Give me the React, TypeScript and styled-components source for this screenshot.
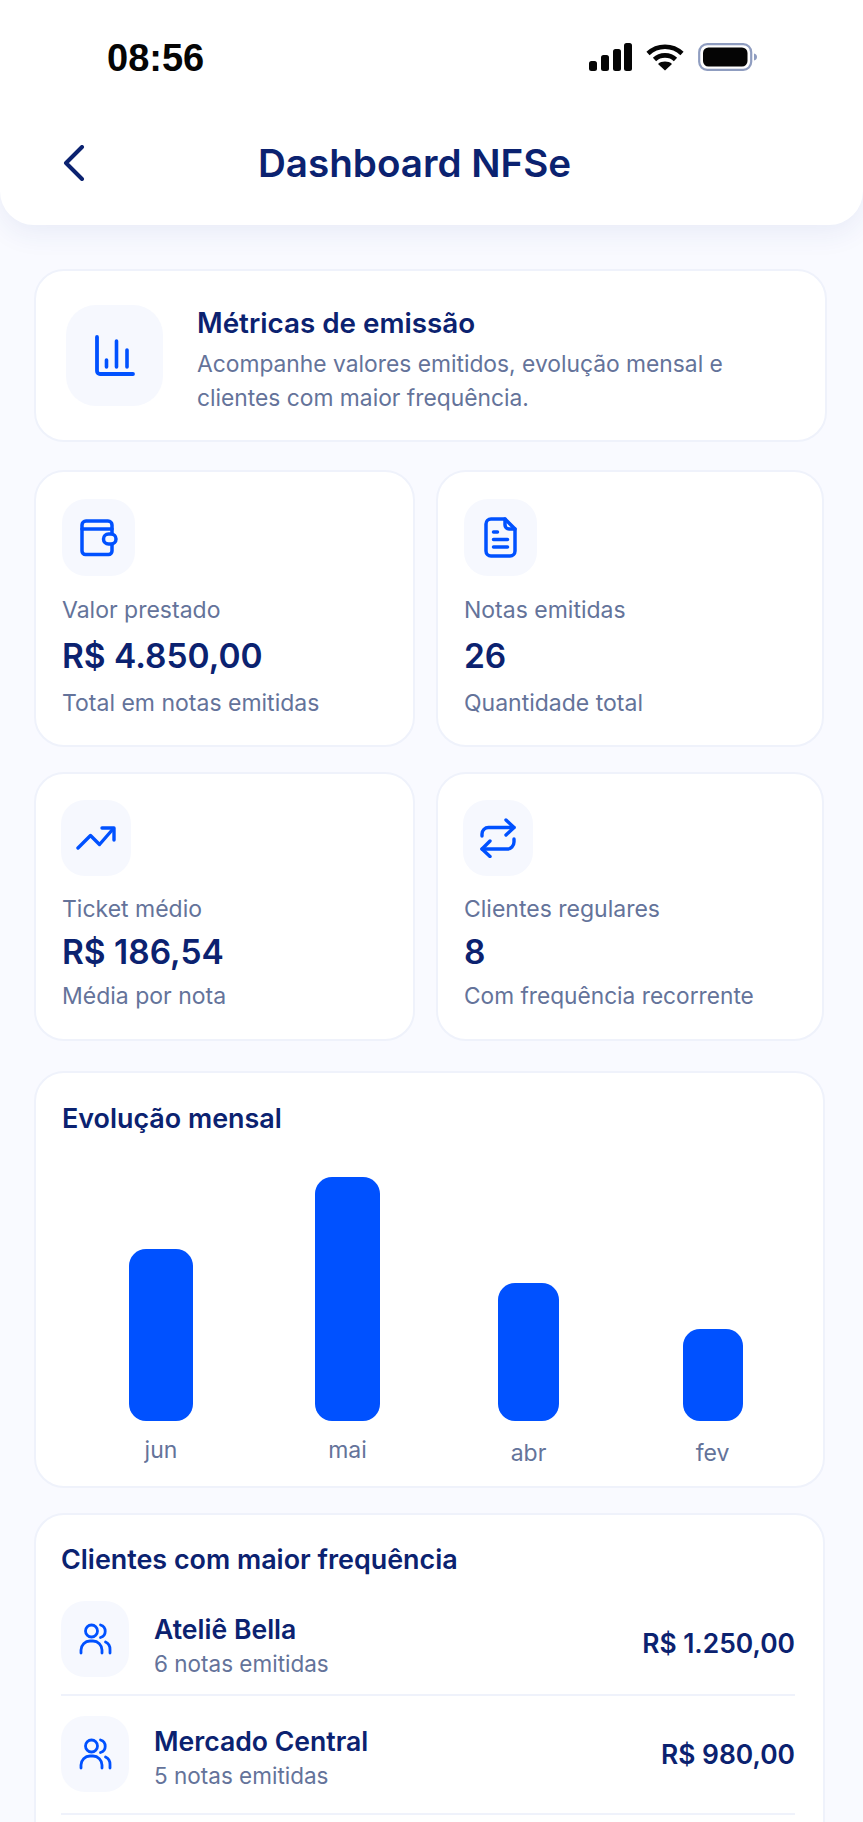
import React from "react";
import styled, { createGlobalStyle } from "styled-components";

const Global = createGlobalStyle`
  html, body { margin: 0; padding: 0; background: #f9faff; }
  body { font-family: Inter, "Noto Sans", sans-serif; -webkit-font-smoothing: antialiased; }
  * { box-sizing: border-box; }
`;

const navy = "#0b2270";
const slate = "#64739a";
const blue = "#0051ff";
const line = "#eff2fb";

const Page = styled.div`
  width: 863px;
  height: 1822px;
  overflow: hidden;
  background: #f9faff;
`;
const Header = styled.header`
  height: 225px;
  background: #ffffff;
  border-radius: 0 0 34px 34px;
  box-shadow: 0 8px 28px rgba(40, 70, 150, 0.08);
  padding: 0 106px 0 63px;
`;
const StatusBar = styled.div`
  height: 100px;
  display: flex;
  align-items: center;
  justify-content: space-between;
  padding: 16px 0 0 44px;
`;
const Time = styled.span`
  font-family: "Liberation Sans", Arial, sans-serif;
  font-weight: 700;
  font-size: 38px;
  color: #050505;
`;
const StatusIcons = styled.div`
  display: flex;
  align-items: center;
  gap: 14px;
  margin-bottom: 2px;
`;
const TitleRow = styled.div`
  display: flex;
  align-items: center;
  height: 64px;
  margin-top: 31px;
`;
const Back = styled.div`
  display: flex;
  width: 195px;
`;
const Title = styled.h1`
  margin: 0;
  font-size: 38.6px;
  line-height: 46px;
  font-weight: 600;
  color: ${navy};
`;
const Content = styled.main`
  padding: 44px 36px 0 34px;
  display: flex;
  flex-direction: column;
`;
const Card = styled.section`
  background: #fff;
  border: 2px solid ${line};
  border-radius: 30px;
`;
const IntroCard = styled(Card)`
  height: 173px;
  width: 793px;
  display: flex;
  align-items: flex-start;
  padding: 34px 0 0 30px;
  gap: 34px;
`;
const Tile = styled.div<{ $w: number; $h: number; $r?: number; $x?: number }>`
  flex: none;
  width: ${(p) => p.$w}px;
  height: ${(p) => p.$h}px;
  margin-left: ${(p) => p.$x ?? 0}px;
  background: #f6f8fe;
  border-radius: ${(p) => p.$r ?? 24}px;
  display: flex;
  align-items: center;
  justify-content: center;
`;
const IntroText = styled.div`
  margin-top: 1px;
`;
const IntroTitle = styled.h2`
  margin: 0 0 7px;
  font-size: 27.8px;
  line-height: 34px;
  font-weight: 600;
  color: ${navy};
`;
const IntroDesc = styled.p`
  margin: 0;
  font-size: 22.8px;
  line-height: 33.5px;
  color: ${slate};
`;
const StatGrid = styled.div<{ $top: number }>`
  display: grid;
  grid-template-columns: 381px 388px;
  column-gap: 21px;
  margin-top: ${(p) => p.$top}px;
`;
const StatCard = styled(Card)<{ $h: number; $pad: number }>`
  height: ${(p) => p.$h}px;
  padding: ${(p) => p.$pad}px 26px 0;
`;
const StatLabel = styled.div<{ $top: number }>`
  margin-top: ${(p) => p.$top}px;
  font-size: 23px;
  line-height: 30px;
  color: ${slate};
`;
const StatValue = styled.div<{ $top: number }>`
  margin-top: ${(p) => p.$top}px;
  font-size: 33.5px;
  line-height: 42px;
  font-weight: 600;
  color: ${navy};
`;
const StatSub = styled.div<{ $top: number; $size?: number }>`
  margin-top: ${(p) => p.$top}px;
  font-size: ${(p) => p.$size ?? 23}px;
  line-height: 30px;
  color: ${slate};
`;
const ChartCard = styled(Card)`
  margin-top: 30px;
  width: 791px;
  height: 417px;
  padding: 28px 0 0 26px;
`;
const SectionTitle = styled.h3`
  margin: 0;
  font-size: 26.9px;
  line-height: 34px;
  font-weight: 600;
  color: ${navy};
`;
const Chart = styled.div`
  display: grid;
  grid-template-columns: 186px 187px 175px 193px;
  height: 244px;
  margin: 42px 0 0 6px;
  align-items: end;
  justify-items: center;
`;
const Bar = styled.div<{ $w: number; $h: number }>`
  width: ${(p) => p.$w}px;
  height: ${(p) => p.$h}px;
  background: ${blue};
  border-radius: 17px;
`;
const Labels = styled(Chart)`
  height: auto;
  margin-top: 14px;
  align-items: start;
`;
const BarLabel = styled.span<{ $drop: number }>`
  font-size: 23px;
  line-height: 30px;
  color: ${slate};
  margin-top: ${(p) => p.$drop}px;
`;
const ClientsCard = styled(Card)`
  margin-top: 25px;
  width: 791px;
  height: 420px;
  padding: 27px 28px 0 25px;
`;
const ClientRow = styled.div<{ $top: number; $pb: number }>`
  display: flex;
  align-items: flex-start;
  margin-top: ${(p) => p.$top}px;
  padding-bottom: ${(p) => p.$pb}px;
  border-bottom: 2px solid ${line};
`;
const ClientText = styled.div<{ $top: number }>`
  flex: 1;
  margin-left: 25px;
  padding-top: ${(p) => p.$top}px;
`;
const ClientName = styled.div`
  font-size: 26.6px;
  line-height: 34px;
  font-weight: 600;
  color: ${navy};
`;
const ClientSub = styled.div`
  font-size: 22.5px;
  line-height: 30px;
  color: ${slate};
  margin-top: 3px;
`;
const Amount = styled.div<{ $top: number }>`
  font-size: 26.4px;
  line-height: 34px;
  font-weight: 600;
  color: ${navy};
  margin-top: ${(p) => p.$top}px;
`;

const Signal = () => (
  <svg width="43" height="28" viewBox="0 0 43 28" fill="#050505">
    <rect x="0" y="18" width="8" height="10" rx="2.5" />
    <rect x="12" y="12" width="8" height="16" rx="2.5" />
    <rect x="24" y="6" width="8" height="22" rx="2.5" />
    <rect x="35" y="0" width="8" height="28" rx="2.5" />
  </svg>
);
const Wifi = () => (
  <svg width="38" height="28" viewBox="0 0 38 28" fill="none" stroke="#050505" strokeWidth="4.6">
    <path d="M2 10.500C11.500 1.500 26.500 1.500 36 10.500" />
    <path d="M8.500 16.500C14 11 24 11 29.500 16.500" />
    <path d="M19 27.500L12 21C15.500 17.800 22.500 17.800 26 21Z" fill="#050505" stroke="none" />
  </svg>
);
const Battery = () => (
  <svg width="59" height="28" viewBox="0 0 59 28" fill="none">
    <rect x="1.200" y="1.200" width="52" height="25.600" rx="8" stroke="#8f9dc0" strokeWidth="2.200" />
    <rect x="5" y="4.500" width="44.500" height="19" rx="5.500" fill="#050505" />
    <path d="M56 10.500c2 .5 3 1.800 3 3.500s-1 3-3 3.500z" fill="#8f9dc0" />
  </svg>
);
const Chevron = () => (
  <svg width="22" height="36" viewBox="0 0 22 36" fill="none" stroke={navy} strokeWidth="4" strokeLinecap="round" strokeLinejoin="round">
    <path d="M19 2L3 18l16 16" />
  </svg>
);
const ChartIcon = () => (
  <svg width="40" height="42" viewBox="0 0 40 42" fill="none" stroke={blue} strokeLinecap="round">
    <path d="M2 2v34a3 3 0 0 0 3 3h33" strokeWidth="3.800" />
    <path d="M11.500 25v7M21.500 6v26M32 15v17" strokeWidth="3.600" />
  </svg>
);
const WalletIcon = () => (
  <svg width="38" height="38" viewBox="0 0 38 38" fill="none" stroke={blue} strokeWidth="3.500" strokeLinecap="round" strokeLinejoin="round">
    <path d="M32 14V6a4 4 0 0 0-4-4H6a4 4 0 0 0-4 4v26a3.500 3.500 0 0 0 3.500 3.500H28.500a3.500 3.500 0 0 0 3.500-3.500v-6" />
    <path d="M2 10h30" />
    <rect x="23.500" y="15" width="12.500" height="10" rx="5" fill="#f6f8fe" />
  </svg>
);
const FileIcon = () => (
  <svg width="33" height="41" viewBox="0 0 33 41" fill="none" stroke={blue} strokeWidth="3.500" strokeLinecap="round" strokeLinejoin="round">
    <path d="M21 2H7a5 5 0 0 0-5 5v27a5 5 0 0 0 5 5h19a5 5 0 0 0 5-5V12L21 2z" />
    <path d="M21 2v6a4 4 0 0 0 4 4h6" />
    <path d="M9.500 15h4M9.500 22.500h14M9.500 30h14" />
  </svg>
);
const TrendIcon = () => (
  <svg width="40" height="24" viewBox="0 0 40 24" fill="none" stroke={blue} strokeWidth="3.400" strokeLinecap="round" strokeLinejoin="round">
    <path d="M2 22l12.500-12.500L23.500 18.500 37 3" />
    <path d="M26 2h12v12" />
  </svg>
);
const RepeatIcon = () => (
  <svg width="36" height="40" viewBox="0 0 36 40" fill="none" stroke={blue} strokeWidth="3.400" strokeLinecap="round" strokeLinejoin="round">
    <path d="M26 2l8 7.500-8 7.500" />
    <path d="M2 18v-2a6.500 6.500 0 0 1 6.500-6.500H34" />
    <path d="M10 23l-8 8 8 7.500" />
    <path d="M34 21v3a7 7 0 0 1-7 7H2" />
  </svg>
);
const UsersIcon = () => (
  <svg width="33" height="32" viewBox="0 0 33 32" fill="none" stroke={blue} strokeWidth="2.800" strokeLinecap="round" strokeLinejoin="round">
    <circle cx="12.500" cy="8" r="6" />
    <path d="M2 30v-3a9 9 0 0 1 9-9h3a9 9 0 0 1 9 9v3" />
    <path d="M21.500 2a6.500 6.500 0 0 1 0 12.500" />
    <path d="M26.500 19a8 8 0 0 1 4.500 7.500V30" />
  </svg>
);

export default function App() {
  return (
    <Page>
      <Global />
      <Header>
        <StatusBar>
          <Time>08:56</Time>
          <StatusIcons>
            <Signal />
            <Wifi />
            <Battery />
          </StatusIcons>
        </StatusBar>
        <TitleRow>
          <Back>
            <Chevron />
          </Back>
          <Title>Dashboard NFSe</Title>
        </TitleRow>
      </Header>
      <Content>
        <IntroCard>
          <Tile $w={97} $h={101} $r={30}>
            <ChartIcon />
          </Tile>
          <IntroText>
            <IntroTitle>Métricas de emissão</IntroTitle>
            <IntroDesc>
              Acompanhe valores emitidos, evolução mensal e
              <br />
              clientes com maior frequência.
            </IntroDesc>
          </IntroText>
        </IntroCard>
        <StatGrid $top={28}>
          <StatCard $h={277} $pad={27}>
            <Tile $w={73} $h={77}>
              <WalletIcon />
            </Tile>
            <StatLabel $top={19}>Valor prestado</StatLabel>
            <StatValue $top={10}>R$ 4.850,00</StatValue>
            <StatSub $top={11}>Total em notas emitidas</StatSub>
          </StatCard>
          <StatCard $h={277} $pad={27}>
            <Tile $w={73} $h={77}>
              <FileIcon />
            </Tile>
            <StatLabel $top={19}>Notas emitidas</StatLabel>
            <StatValue $top={10}>26</StatValue>
            <StatSub $top={11}>Quantidade total</StatSub>
          </StatCard>
        </StatGrid>
        <StatGrid $top={25}>
          <StatCard $h={269} $pad={26}>
            <Tile $w={70} $h={76} $x={-1}>
              <TrendIcon />
            </Tile>
            <StatLabel $top={18}>Ticket médio</StatLabel>
            <StatValue $top={7}>R$ 186,54</StatValue>
            <StatSub $top={8}>Média por nota</StatSub>
          </StatCard>
          <StatCard $h={269} $pad={26}>
            <Tile $w={70} $h={76} $x={-1}>
              <RepeatIcon />
            </Tile>
            <StatLabel $top={18}>Clientes regulares</StatLabel>
            <StatValue $top={7}>8</StatValue>
            <StatSub $top={8} $size={22.7}>Com frequência recorrente</StatSub>
          </StatCard>
        </StatGrid>
        <ChartCard>
          <SectionTitle>Evolução mensal</SectionTitle>
          <Chart>
            <Bar $w={64} $h={172} />
            <Bar $w={65} $h={244} />
            <Bar $w={61} $h={138} />
            <Bar $w={60} $h={92} />
          </Chart>
          <Labels>
            <BarLabel $drop={0}>jun</BarLabel>
            <BarLabel $drop={0}>mai</BarLabel>
            <BarLabel $drop={3}>abr</BarLabel>
            <BarLabel $drop={3}>fev</BarLabel>
          </Labels>
        </ChartCard>
        <ClientsCard>
          <SectionTitle>Clientes com maior frequência</SectionTitle>
          <ClientRow $top={25} $pb={15}>
            <Tile $w={68} $h={76}>
              <UsersIcon />
            </Tile>
            <ClientText $top={11}>
              <ClientName>Ateliê Bella</ClientName>
              <ClientSub>6 notas emitidas</ClientSub>
            </ClientText>
            <Amount $top={25}>R$ 1.250,00</Amount>
          </ClientRow>
          <ClientRow $top={20} $pb={21}>
            <Tile $w={68} $h={76}>
              <UsersIcon />
            </Tile>
            <ClientText $top={8}>
              <ClientName>Mercado Central</ClientName>
              <ClientSub>5 notas emitidas</ClientSub>
            </ClientText>
            <Amount $top={21}>R$ 980,00</Amount>
          </ClientRow>
        </ClientsCard>
      </Content>
    </Page>
  );
}
